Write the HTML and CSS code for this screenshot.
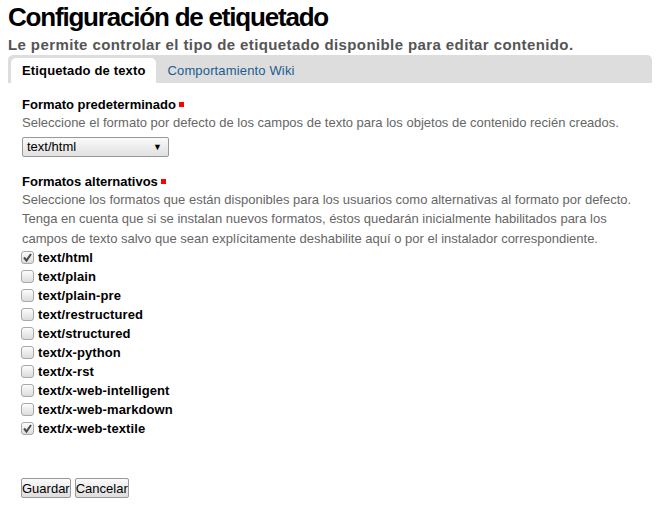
FILE: index.html
```html
<!DOCTYPE html>
<html lang="es">
<head>
<meta charset="utf-8">
<title>Configuración de etiquetado</title>
<link rel="stylesheet" href="styles.css">
</head>
<body>
<h1 class="title">Configuración de etiquetado</h1>
<p class="subtitle">Le permite controlar el tipo de etiquetado disponible para editar contenido.</p>
<div class="tabs">
  <span class="tab active">Etiquetado de texto</span>
  <a class="tab" href="#">Comportamiento Wiki</a>
</div>
<form class="content">
  <div class="field">
    <div class="label">Formato predeterminado <span class="req"></span></div>
    <div class="help">Seleccione el formato por defecto de los campos de texto para los objetos de contenido recién creados.</div>
    <div class="select"><span>text/html</span><span class="arrow">▼</span></div>
  </div>
  <div class="field">
    <div class="label">Formatos alternativos <span class="req"></span></div>
    <div class="help">Seleccione los formatos que están disponibles para los usuarios como alternativas al formato por defecto. Tenga en cuenta que si se instalan nuevos formatos, éstos quedarán inicialmente habilitados para los campos de texto salvo que sean explícitamente deshabilite aquí o por el instalador correspondiente.</div>
    <ul class="checks">
      <li><span class="box checked"><svg viewBox="0 0 13 13" width="13" height="13"><path d="M3 6.5 L5.5 9.5 L10 3" fill="none" stroke="#4a4a4a" stroke-width="2"/></svg></span><label>text/html</label></li>
      <li><span class="box"></span><label>text/plain</label></li>
      <li><span class="box"></span><label>text/plain-pre</label></li>
      <li><span class="box"></span><label>text/restructured</label></li>
      <li><span class="box"></span><label>text/structured</label></li>
      <li><span class="box"></span><label>text/x-python</label></li>
      <li><span class="box"></span><label>text/x-rst</label></li>
      <li><span class="box"></span><label>text/x-web-intelligent</label></li>
      <li><span class="box"></span><label>text/x-web-markdown</label></li>
      <li><span class="box checked"><svg viewBox="0 0 13 13" width="13" height="13"><path d="M3 6.5 L5.5 9.5 L10 3" fill="none" stroke="#4a4a4a" stroke-width="2"/></svg></span><label>text/x-web-textile</label></li>
    </ul>
  </div>
  <div class="buttons">
    <button type="button" class="btn">Guardar</button>
    <button type="button" class="btn">Cancelar</button>
  </div>
</form>
</body>
</html>
```
FILE: styles.css
```css
html, body { margin: 0; padding: 0; background: #fff; }
body {
  font-family: "Liberation Sans", Arial, sans-serif;
  color: #000;
  padding: 0 6px 0 8px;
}
.title {
  font-size: 26px;
  letter-spacing: -1.2px;
  font-weight: bold;
  margin: 0;
  line-height: 34px;
}
.subtitle {
  font-size: 15px;
  letter-spacing: 0.4px;
  font-weight: bold;
  color: #555;
  margin: 1px 0 0;
  line-height: 20px;
}
.tabs {
  background: #ddd;
  border-radius: 5px 5px 0 0;
  height: 28px;
  display: flex;
  align-items: flex-end;
  padding-left: 3px;
}
.tab {
  font-size: 13px;
  line-height: 25px;
  height: 25px;
  padding: 0 11px;
  text-decoration: none;
  color: #205c90;
  letter-spacing: 0.15px;
}
.tab.active {
  background: #fff;
  color: #000;
  font-weight: bold;
  border-radius: 5px 5px 0 0;
}
.content {
  padding: 13px 14px 0;
}
.field { margin-bottom: 16px; }
.label {
  font-size: 13px;
  font-weight: bold;
  line-height: 17px;
}
.req {
  display: inline-block;
  width: 5px;
  height: 5px;
  background: #f00;
  vertical-align: 2px;
}
.help {
  font-size: 13px;
  color: #666;
  line-height: 19.5px;
}
.select {
  margin-top: 4px;
  height: 18px;
  border: 1px solid #999;
  border-radius: 2px;
  background: linear-gradient(#fafafa, #e0e0e0);
  display: flex;
  justify-content: space-between;
  align-items: center;
  font-size: 13px;
  padding: 0 0 0 4px;
  box-sizing: content-box;
  width: 141px;
}
.arrow { font-size: 9px; margin-right: 6px; }
.checks { list-style: none; margin: 0; padding: 0; }
.checks li {
  display: flex;
  align-items: center;
  height: 19px;
}
.box {
  display: block;
  box-sizing: border-box;
  width: 13px;
  height: 13px;
  margin: 0 4px 0 -1px;
  border: 1px solid #a8a8a8;
  border-radius: 3px;
  background: linear-gradient(#fcfcfc, #dcdcdc);
  position: relative;
}
.box svg { position: absolute; left: -1px; top: -1px; }
.checks label {
  font-size: 13px;
  font-weight: bold;
  letter-spacing: 0.1px;
}
.buttons { margin-top: 40px; display: flex; gap: 4px; margin-left: -1px; }
.btn {
  font-family: "Liberation Sans", Arial, sans-serif;
  font-size: 13px;
  padding: 0;
  border: 1px solid #999;
  border-radius: 2px;
  background: linear-gradient(#fafafa, #ddd);
  color: #000;
  height: 20px;
}
```
